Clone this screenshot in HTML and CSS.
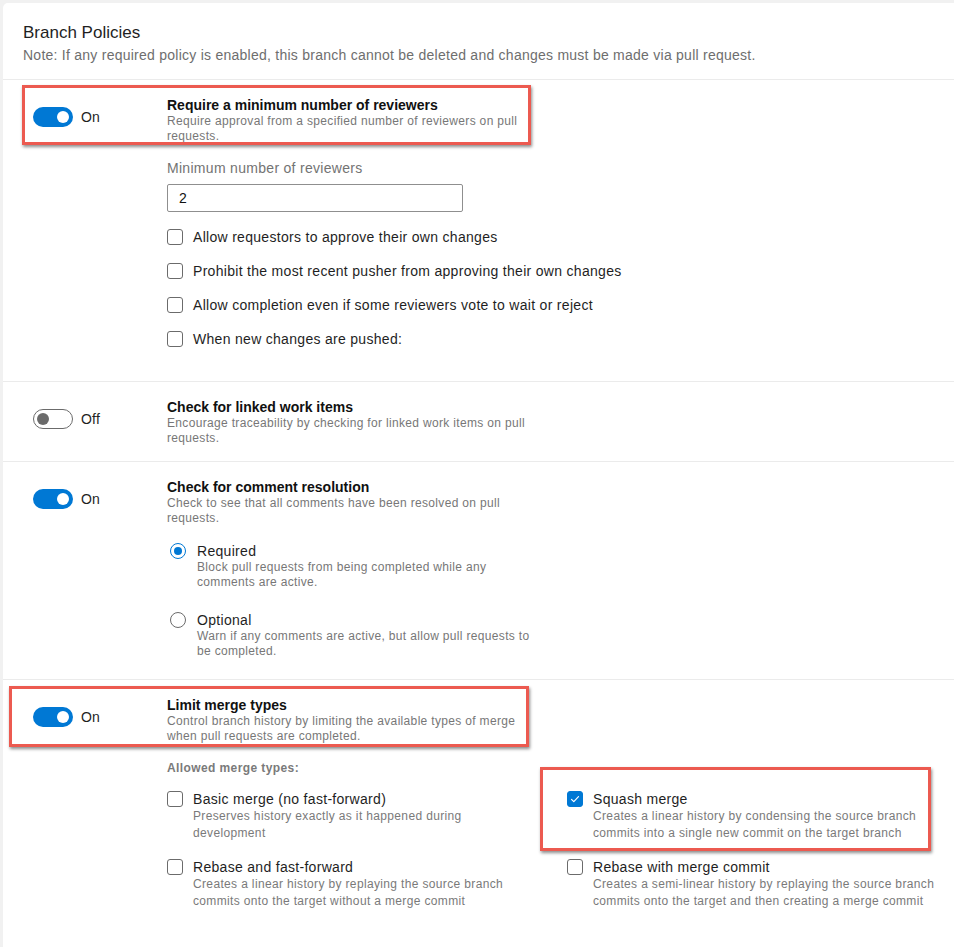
FILE: index.html
```html
<!DOCTYPE html>
<html lang="en">
<head>
<meta charset="utf-8">
<title>Branch Policies</title>
<link rel="stylesheet" href="styles.css">
</head>
<body>
<div class="card">
  <header class="head">
    <h1 class="title">Branch Policies</h1>
    <p class="note">Note: If any required policy is enabled, this branch cannot be deleted and changes must be made via pull request.</p>
  </header>

  <section class="policy p1">
    <div class="annot a1"></div>
    <div class="toggle-col">
      <span class="toggle on"><span class="knob"></span></span>
      <span class="tlabel">On</span>
    </div>
    <div class="body">
      <div class="ptitle">Require a minimum number of reviewers</div>
      <div class="pdesc">Require approval from a specified number of reviewers on pull<br>requests.</div>
      <div class="field-label">Minimum number of reviewers</div>
      <div class="input">2</div>
      <div class="checks">
        <label class="check"><span class="box"></span><span>Allow requestors to approve their own changes</span></label>
        <label class="check"><span class="box"></span><span>Prohibit the most recent pusher from approving their own changes</span></label>
        <label class="check"><span class="box"></span><span>Allow completion even if some reviewers vote to wait or reject</span></label>
        <label class="check"><span class="box"></span><span>When new changes are pushed:</span></label>
      </div>
    </div>
  </section>

  <section class="policy p2">
    <div class="toggle-col">
      <span class="toggle off"><span class="knob"></span></span>
      <span class="tlabel">Off</span>
    </div>
    <div class="body">
      <div class="ptitle">Check for linked work items</div>
      <div class="pdesc">Encourage traceability by checking for linked work items on pull<br>requests.</div>
    </div>
  </section>

  <section class="policy p3">
    <div class="toggle-col">
      <span class="toggle on"><span class="knob"></span></span>
      <span class="tlabel">On</span>
    </div>
    <div class="body">
      <div class="ptitle">Check for comment resolution</div>
      <div class="pdesc">Check to see that all comments have been resolved on pull<br>requests.</div>
      <div class="radios">
        <div class="radio-item">
          <span class="radio checked"></span>
          <div>
            <div class="olabel">Required</div>
            <div class="pdesc">Block pull requests from being completed while any<br>comments are active.</div>
          </div>
        </div>
        <div class="radio-item">
          <span class="radio"></span>
          <div>
            <div class="olabel">Optional</div>
            <div class="pdesc">Warn if any comments are active, but allow pull requests to<br>be completed.</div>
          </div>
        </div>
      </div>
    </div>
  </section>

  <section class="policy p4">
    <div class="annot a4"></div>
    <div class="toggle-col">
      <span class="toggle on"><span class="knob"></span></span>
      <span class="tlabel">On</span>
    </div>
    <div class="body">
      <div class="ptitle">Limit merge types</div>
      <div class="pdesc">Control branch history by limiting the available types of merge<br>when pull requests are completed.</div>
      <div class="allowed">Allowed merge types:</div>
      <div class="merge-grid">
        <div class="merge">
          <span class="box"></span>
          <div>
            <div class="olabel">Basic merge (no fast-forward)</div>
            <div class="mdesc">Preserves history exactly as it happened during<br>development</div>
          </div>
        </div>
        <div class="merge squash">
          <div class="annot a5"></div>
          <span class="box checked"><svg viewBox="0 0 16 16" width="16" height="16"><path d="M4.5 8.3l2.3 2.3 4.7-4.9" fill="none" stroke="#fff" stroke-width="1.2" stroke-linecap="round" stroke-linejoin="round"/></svg></span>
          <div>
            <div class="olabel">Squash merge</div>
            <div class="mdesc">Creates a linear history by condensing the source branch<br>commits into a single new commit on the target branch</div>
          </div>
        </div>
        <div class="merge">
          <span class="box"></span>
          <div>
            <div class="olabel">Rebase and fast-forward</div>
            <div class="mdesc">Creates a linear history by replaying the source branch<br>commits onto the target without a merge commit</div>
          </div>
        </div>
        <div class="merge">
          <span class="box"></span>
          <div>
            <div class="olabel">Rebase with merge commit</div>
            <div class="mdesc">Creates a semi-linear history by replaying the source branch<br>commits onto the target and then creating a merge commit</div>
          </div>
        </div>
      </div>
    </div>
  </section>
</div>
</body>
</html>
```

FILE: styles.css
```css
* { box-sizing: border-box; }
html, body { margin: 0; padding: 0; }
body {
  background: #f1f1f1;
  font-family: "Liberation Sans", Arial, sans-serif;
  color: rgba(0,0,0,.9);
  overflow: hidden;
}
.card {
  margin: 3px 0 0 3px;
  background: #fff;
  border-top-left-radius: 5px;
  min-height: 960px;
}
.head {
  padding: 19px 20px 15px 20px;
  border-bottom: 1px solid #ebebeb;
}
.title {
  margin: 0;
  font-size: 17px;
  font-weight: 400;
  line-height: 22px;
  color: #1f1f1f;
}
.note {
  margin: 2px 0 0;
  font-size: 14px;
  line-height: 18px;
  letter-spacing: .25px;
  color: #6e6e6e;
}
.policy {
  position: relative;
  display: flex;
  padding: 16px 0 20px 30px;
  border-bottom: 1px solid #ebebeb;
}
.p1 { padding-bottom: 25px; }
.p2 { padding-bottom: 15px; }
.p4 { border-bottom: none; padding-bottom: 40px; }
.toggle-col {
  width: 134px;
  flex: none;
  display: flex;
  align-items: center;
  align-self: flex-start;
  gap: 8px;
  margin-top: 11px;
  height: 20px;
}
.toggle {
  width: 40px;
  height: 20px;
  border-radius: 10px;
  position: relative;
  flex: none;
}
.toggle.on { background: #0078d4; }
.toggle.off { background: #fff; border: 1px solid #6b6b6b; }
.knob {
  position: absolute;
  width: 12px;
  height: 12px;
  border-radius: 50%;
  top: 4px;
}
.toggle.on .knob { background: #fff; right: 4px; }
.toggle.off .knob { background: #6b6b6b; left: 3px; top: 3px; }
.tlabel { font-size: 14px; color: #1f1f1f; letter-spacing: .2px; }
.body { flex: 1; }
.ptitle {
  font-size: 14px;
  font-weight: 700;
  line-height: 18px;
  color: #111;
}
.pdesc {
  font-size: 12px;
  line-height: 15px;
  letter-spacing: .33px;
  color: #777;
}
.field-label {
  margin-top: 14px;
  font-size: 14px;
  line-height: 20px;
  letter-spacing: .3px;
  color: #737373;
}
.input {
  margin-top: 6px;
  width: 296px;
  height: 28px;
  border: 1px solid #8f8f8f;
  border-radius: 2px;
  padding-left: 11px;
  font-size: 14px;
  line-height: 26px;
  color: #111;
}
.checks { margin-top: 8px; }
.check {
  display: flex;
  align-items: center;
  gap: 10px;
  height: 34px;
  font-size: 14px;
  letter-spacing: .3px;
  color: #1f1f1f;
}
.box {
  width: 16px;
  height: 16px;
  flex: none;
  border: 1px solid #6b6b6b;
  border-radius: 3px;
  background: #fff;
  display: block;
}
.box.checked {
  background: #0078d4;
  border-color: #0078d4;
}
.box.checked svg { display: block; margin: -1px; }
.radios { margin-top: 16px; display: flex; flex-direction: column; gap: 21px; }
.radio-item { display: flex; gap: 11px; padding-left: 3px; }
.radio {
  width: 16px;
  height: 16px;
  border-radius: 50%;
  border: 1px solid #6b6b6b;
  flex: none;
  margin-top: 1px;
  position: relative;
}
.radio.checked { border-color: #0078d4; }
.radio.checked::after {
  content: "";
  position: absolute;
  inset: 3px;
  border-radius: 50%;
  background: #0078d4;
}
.olabel {
  font-size: 14px;
  line-height: 18px;
  letter-spacing: .3px;
  color: #1f1f1f;
}
.allowed {
  margin-top: 16px;
  font-size: 12px;
  font-weight: 700;
  line-height: 16px;
  letter-spacing: .4px;
  color: #7a7a7a;
}
.merge-grid {
  margin-top: 14px;
  display: grid;
  grid-template-columns: 400px 400px;
  row-gap: 16px;
}
.merge { display: flex; gap: 10px; position: relative; }
.merge .box { margin-top: 1px; }
.mdesc {
  font-size: 12px;
  line-height: 17px;
  letter-spacing: .35px;
  color: #7a7a7a;
}
.annot {
  position: absolute;
  border: 3px solid #ec5a50;
  box-shadow: 1px 2px 3px rgba(0,0,0,.45);
  pointer-events: none;
}
.a1 { left: 19px; top: 5px; width: 509px; height: 60px; }
.a4 { left: 6px; top: 6px; width: 520px; height: 61px; }
.a5 { left: -27px; top: -23px; width: 391px; height: 84px; }
```
